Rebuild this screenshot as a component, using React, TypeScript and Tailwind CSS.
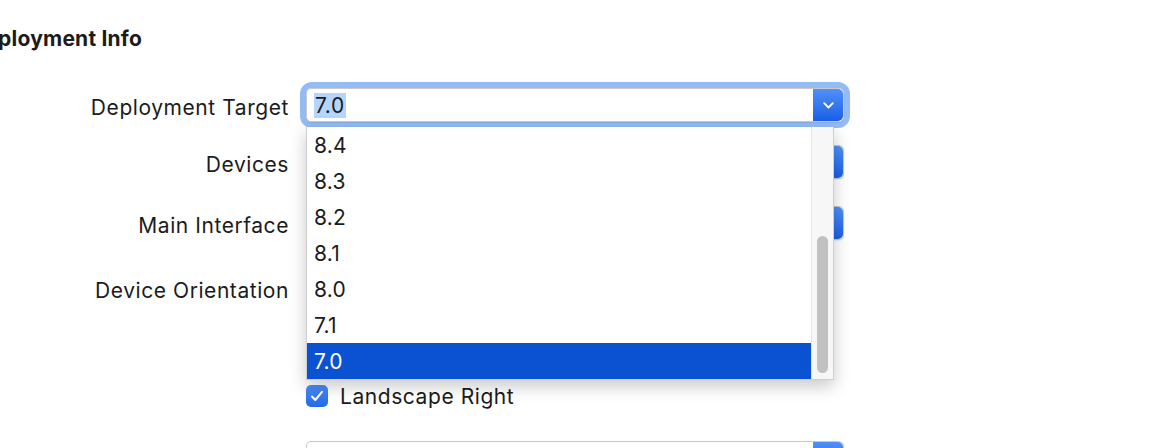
import { ReactNode } from "react";

function Chevron() {
  return (
    <svg width="11" height="7" viewBox="0 0 11 7" fill="none">
      <polyline points="1.2,1.2 5.5,5.5 9.8,1.2" stroke="white" strokeWidth="1.8" strokeLinecap="round" strokeLinejoin="round" />
    </svg>
  );
}

function UpDown() {
  return (
    <svg width="9" height="16" viewBox="0 0 9 16" fill="none">
      <polyline points="1.2,6 4.5,2.5 7.8,6" stroke="white" strokeWidth="1.6" strokeLinecap="round" strokeLinejoin="round" />
      <polyline points="1.2,10 4.5,13.5 7.8,10" stroke="white" strokeWidth="1.6" strokeLinecap="round" strokeLinejoin="round" />
    </svg>
  );
}

function BlueButton({ children }: { children: ReactNode }) {
  return (
    <div className="flex h-full w-[30px] shrink-0 items-center justify-center rounded-r-[5px] bg-gradient-to-b from-[#4f90f8] to-[#1a5fe6]">
      {children}
    </div>
  );
}

function Field({ children, arrow }: { children?: ReactNode; arrow: ReactNode }) {
  return (
    <div className="flex h-[34px] w-full items-stretch rounded-[5px] border border-[#c9c9c9] bg-white shadow-[0_1px_1px_rgba(0,0,0,0.08)]">
      <div className="flex flex-1 items-center pl-[7px]">{children}</div>
      <BlueButton>{arrow}</BlueButton>
    </div>
  );
}

function Row({ label, children, className }: { label?: string; children: ReactNode; className: string }) {
  return (
    <div className={"flex items-center " + className}>
      <div className="w-[289px] shrink-0 pt-[4px] text-right">{label}</div>
      <div className="relative ml-[17px] w-[538px]">{children}</div>
    </div>
  );
}

function CheckBox({ checked, label }: { checked: boolean; label?: string }) {
  return (
    <div className="flex items-center">
      {checked ? (
        <div className="flex h-[22px] w-[22px] items-center justify-center rounded-[5px] bg-gradient-to-b from-[#4a8ef7] to-[#2468e8]">
          <svg width="14" height="12" viewBox="0 0 14 12" fill="none">
            <polyline points="2,6.5 5.3,10 12,1.8" stroke="white" strokeWidth="2" strokeLinecap="round" strokeLinejoin="round" />
          </svg>
        </div>
      ) : (
        <div className="h-[22px] w-[22px] rounded-[5px] border border-[#b5b5b5] bg-white" />
      )}
      {label && <span className="ml-[12px]">{label}</span>}
    </div>
  );
}

const versions = ["8.4", "8.3", "8.2", "8.1", "8.0", "7.1", "7.0"];

export default function App() {
  return (
    <div className="relative h-[448px] w-[1162px] overflow-hidden bg-white text-[21px] leading-none tracking-[0.027em] text-[#1b1b1b] [font-family:Inter,'Noto_Sans',sans-serif]">
      <div className="pt-[27px]">
        <h2 className="-ml-[30px] h-[24px] text-[21px] font-bold leading-[24px] tracking-[0.01em]">Deployment Info</h2>

        <Row label="Deployment Target" className="mt-[37px] h-[34px]">
          <div className="rounded-[6px] ring-[6px] ring-[#93bcf4]">
            <Field arrow={<Chevron />}>
              <span className="bg-[#b4d5fe] px-[1px] py-[2px]">7.0</span>
            </Field>
          </div>

          {/* open list */}
          <div className="absolute left-0 top-[39px] z-10 flex h-[253px] w-[528px] border border-t-0 border-[#cfcfcf] bg-white shadow-[0_6px_16px_rgba(0,0,0,0.22)]">
            <div className="flex flex-1 flex-col tracking-[0.01em]">
              {versions.map((v) => (
                <div
                  key={v}
                  className={
                    "flex h-[36px] items-center pl-[7px] " +
                    (v === "7.0" ? "bg-[#0a52d1] text-white" : "")
                  }
                >
                  {v}
                </div>
              ))}
            </div>
            <div className="w-[22px] border-l border-[#e4e4e4] bg-[#f7f7f7]">
              <div className="mx-auto mt-[109px] h-[137px] w-[11px] rounded-full bg-[#c1c1c1]" />
            </div>
          </div>
        </Row>

        <Row label="Devices" className="mt-[23px] h-[34px]">
          <Field arrow={<UpDown />} />
        </Row>

        <Row label="Main Interface" className="mt-[27px] h-[34px]">
          <Field arrow={<Chevron />} />
        </Row>

        <Row label="Device Orientation" className="mt-[30px] h-[36px]">
          <CheckBox checked />
        </Row>
        <Row className="h-[36px]">
          <CheckBox checked={false} />
        </Row>
        <Row className="h-[36px]">
          <CheckBox checked />
        </Row>
        <Row className="h-[36px]">
          <CheckBox checked label="Landscape Right" />
        </Row>

        <Row className="mt-[27px] h-[34px]">
          <Field arrow={<UpDown />} />
        </Row>
      </div>
    </div>
  );
}
